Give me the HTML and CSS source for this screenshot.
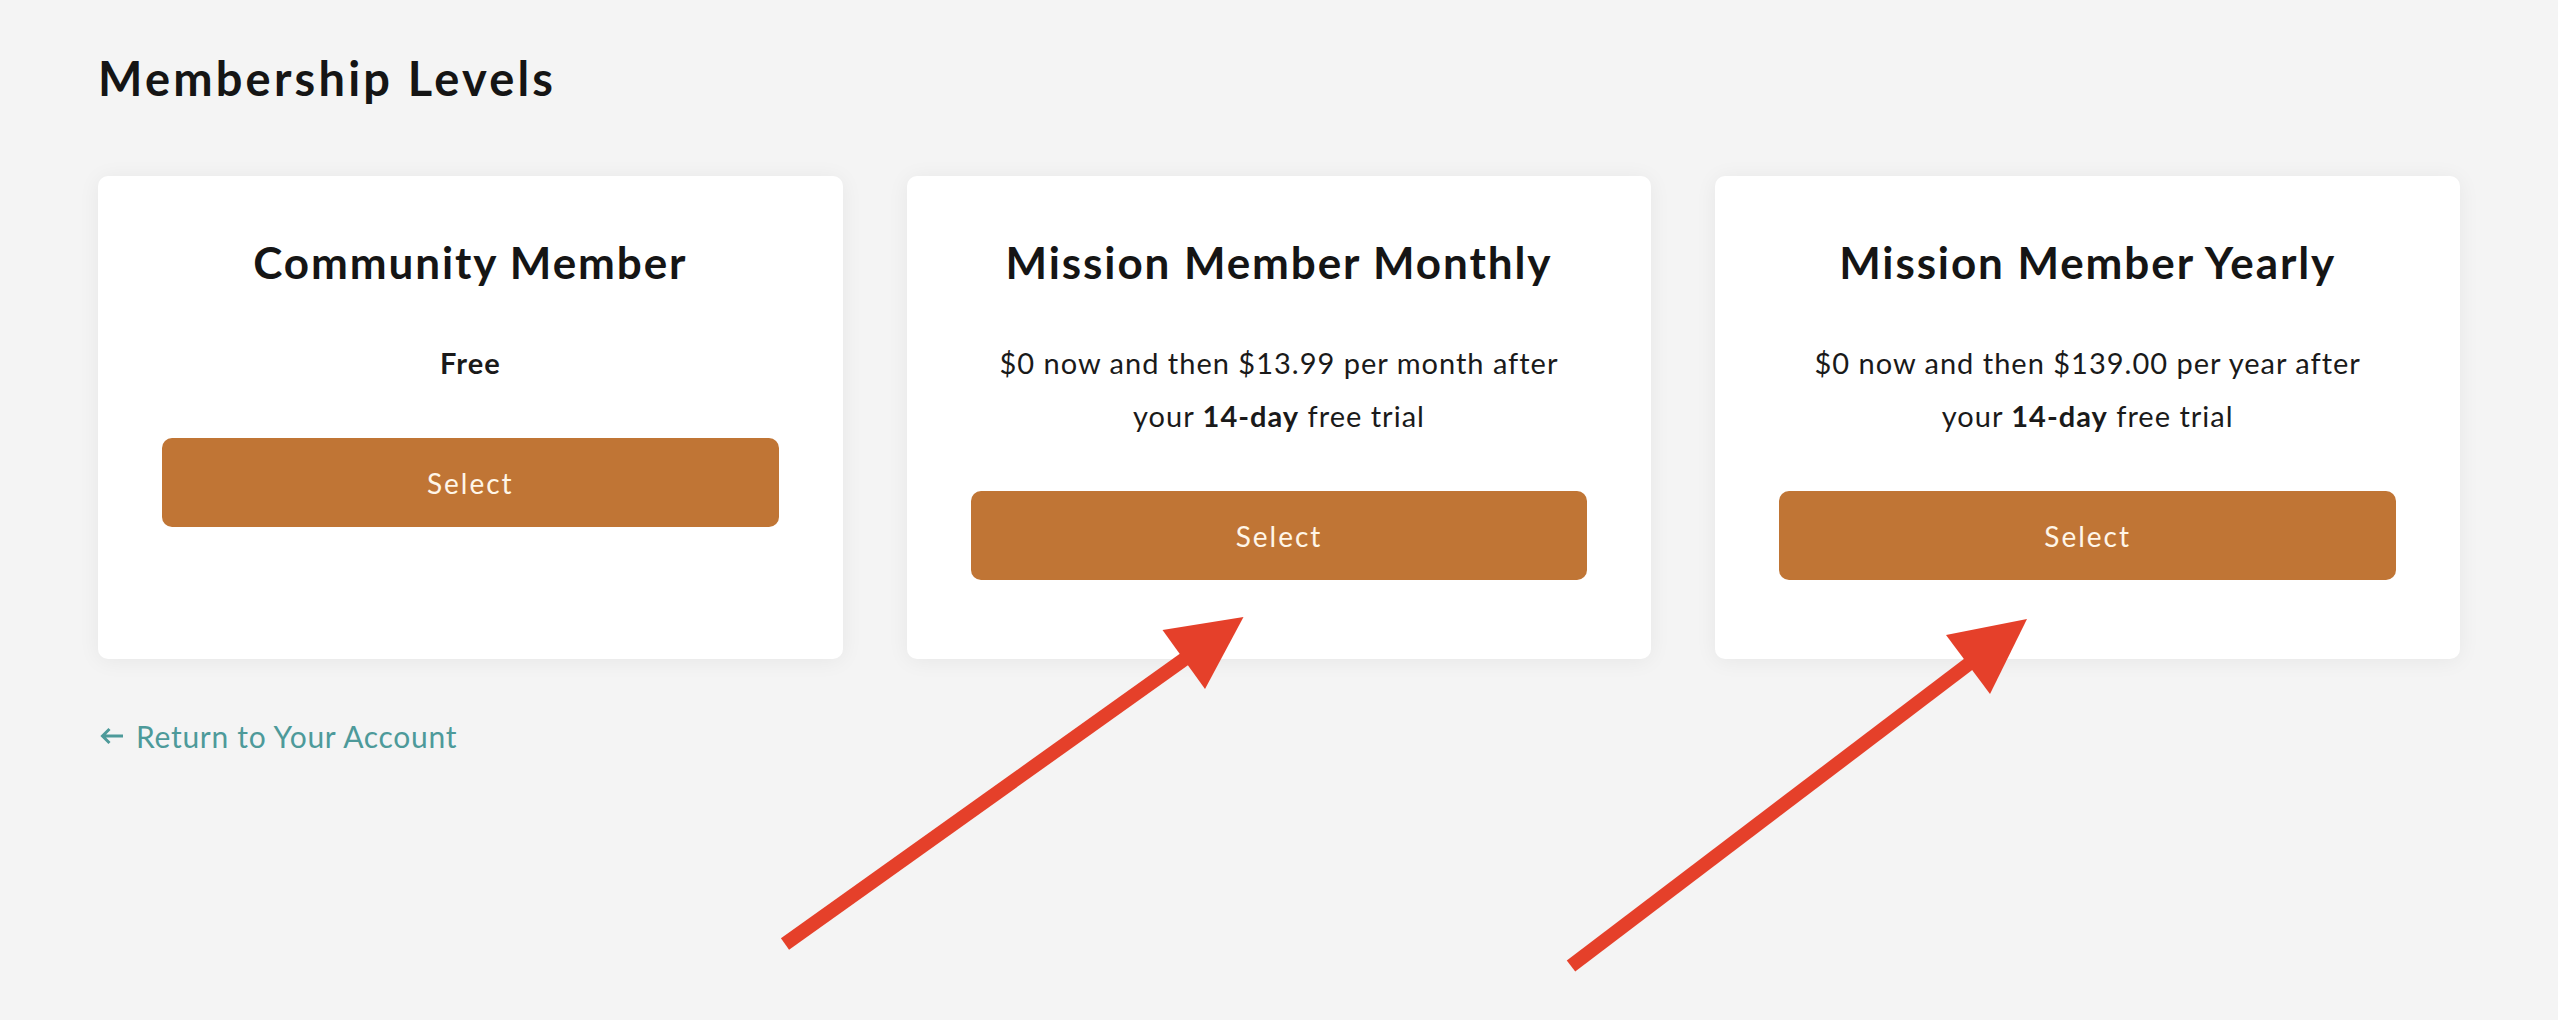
FILE: index.html
```html
<!DOCTYPE html>
<html lang="en">
<head>
<meta charset="utf-8">
<title>Membership Levels</title>
<link rel="stylesheet" href="styles.css">
</head>
<body>
<main class="page">
  <h1 class="page-title">Membership Levels</h1>
  <section class="levels">
    <article class="level">
      <h2 class="level-name">Community Member</h2>
      <p class="level-price"><strong>Free</strong></p>
      <a class="select-btn" href="#">Select</a>
    </article>
    <article class="level">
      <h2 class="level-name">Mission Member Monthly</h2>
      <p class="level-price"><span>$0 now and then $13.99 per month after</span><br><span>your <strong>14-day</strong> free trial</span></p>
      <a class="select-btn" href="#">Select</a>
    </article>
    <article class="level">
      <h2 class="level-name">Mission Member Yearly</h2>
      <p class="level-price"><span>$0 now and then $139.00 per year after</span><br><span>your <strong>14-day</strong> free trial</span></p>
      <a class="select-btn" href="#">Select</a>
    </article>
  </section>
  <a class="return-link" href="#">
    <svg class="return-icon" width="24" height="18" viewBox="0 0 24 18" aria-hidden="true">
      <path d="M23 9H2.5M9.5 2L2.5 9l7 7" fill="none" stroke="currentColor" stroke-width="3" stroke-linecap="butt" stroke-linejoin="miter"/>
    </svg>
    <span>Return to Your Account</span>
  </a>
</main>
<svg class="annotations" width="2558" height="1020" viewBox="0 0 2558 1020" aria-hidden="true">
  <g fill="#e5402a" stroke="#e5402a">
    <line x1="785" y1="944" x2="1186" y2="658" stroke-width="14"/>
    <polygon points="1243.5,617 1162.5,630 1205,689" stroke="none"/>
    <line x1="1571" y1="966" x2="1970" y2="663" stroke-width="14"/>
    <polygon points="2027,619 1946,635 1990,694" stroke="none"/>
  </g>
</svg>
</body>
</html>
```

FILE: styles.css
```css
* { box-sizing: border-box; }

html, body {
  margin: 0;
  padding: 0;
  height: 1020px;
  overflow: hidden;
}

body {
  background: #f4f4f4;
  font-family: "Lato", "Noto Sans", sans-serif;
  color: #1a1a1a;
  position: relative;
}

.page {
  padding: 50px 98px 0 98px;
}

.page-title {
  margin: 0;
  font-size: 47px;
  line-height: 56px;
  font-weight: 700;
  color: #151515;
  letter-spacing: 3.2px;
}

.levels {
  margin-top: 70px;
  display: grid;
  grid-template-columns: repeat(3, 1fr);
  column-gap: 64px;
}

.level {
  background: #ffffff;
  border-radius: 10px;
  box-shadow: 0 2px 22px rgba(0, 0, 0, 0.06);
  padding: 60px 64px 79px 64px;
  display: flex;
  flex-direction: column;
  align-items: stretch;
  text-align: center;
}

.level-name {
  margin: 0;
  font-size: 44px;
  line-height: 52px;
  font-weight: 700;
  color: #151515;
  letter-spacing: 1.9px;
}

.level-price {
  margin: 48px 0 0 0;
  font-size: 29px;
  line-height: 53px;
  font-weight: 400;
  color: #1a1a1a;
  letter-spacing: 1px;
}

.level-price strong { font-weight: 700; }

.select-btn {
  margin-top: 49px;
  height: 89px;
  display: flex;
  align-items: center;
  justify-content: center;
  background: #c07535;
  border-radius: 10px;
  color: #fff6e8;
  font-size: 28px;
  font-weight: 400;
  letter-spacing: 2px;
  text-decoration: none;
}

.return-link {
  margin-top: 59px;
  display: inline-flex;
  align-items: center;
  gap: 12px;
  color: #4d9a9a;
  font-size: 30px;
  line-height: 36px;
  letter-spacing: 0.7px;
  text-decoration: none;
}

.return-icon { display: block; margin-left: 2px; }

.annotations {
  position: absolute;
  left: 0;
  top: 0;
  pointer-events: none;
}
```
